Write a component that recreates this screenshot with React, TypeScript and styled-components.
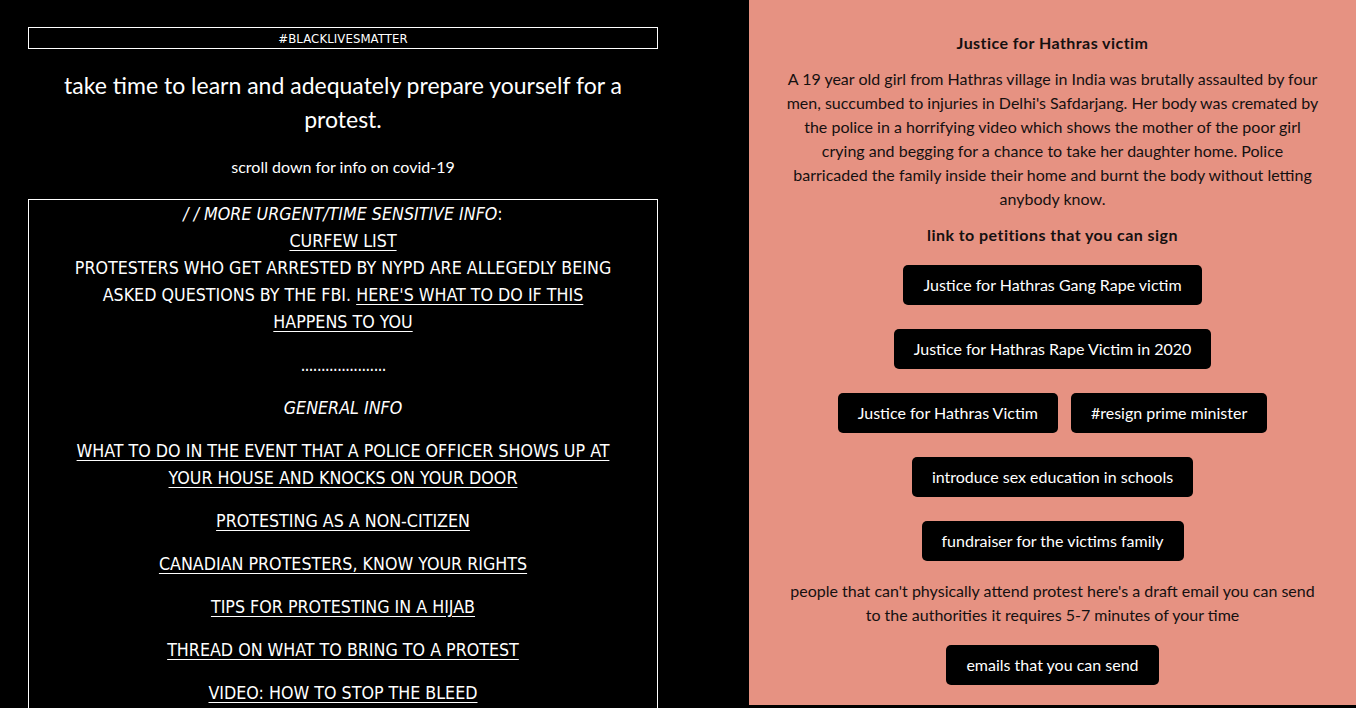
import React from "react";
import styled, { createGlobalStyle } from "styled-components";

const Global = createGlobalStyle`
  html, body { margin: 0; padding: 0; background: #000; }
  body { overflow: hidden; }
  a { color: inherit; }
`;

const Page = styled.div`
  display: grid;
  grid-template-columns: 749px 1fr;
  align-items: start;
  width: 1356px;
  height: 708px;
  overflow: hidden;
  background: #000;
`;

const Left = styled.div`
  padding: 27px 91px 0 28px;
  color: #fff;
  text-align: center;
`;

const Banner = styled.div`
  border: 1px solid #fff;
  height: 20px;
  line-height: 21px;
  font-family: "Liberation Sans Narrow", "DejaVu Sans Condensed", sans-serif;
  font-size: 13px;
  letter-spacing: 0.1px;
`;

const Headline = styled.h1`
  margin: 19px 0 0;
  padding: 0 12px;
  font-family: Lato, "Liberation Sans", sans-serif;
  font-weight: 400;
  font-size: 23px;
  line-height: 34px;
`;

const Sub = styled.p`
  margin: 19px 0 0;
  font-family: Lato, "Liberation Sans", sans-serif;
  font-size: 16px;
  line-height: 24px;
`;

const InfoBox = styled.div`
  margin-top: 20px;
  border: 1px solid #fff;
  border-bottom: none;
  padding: 1px 40px 40px;
  font-family: "Liberation Sans Narrow", "DejaVu Sans Condensed", sans-serif;
  font-size: 17.7px;
  line-height: 27px;
`;

const Para = styled.p`
  margin: 16px 0 0;
  &:first-child { margin-top: 0; }
`;

const Dots = styled(Para)`
  letter-spacing: -1px;
`;

const Em = styled.span`
  font-style: italic;
`;

const Link = styled.a`
  text-decoration: underline;
  text-underline-offset: 3px;
`;

const Right = styled.div`
  background: #e69282;
  color: #151010;
  padding: 31px 34px 20px;
  font-family: Lato, "Liberation Sans", sans-serif;
  font-size: 16px;
  line-height: 24px;
  text-align: center;
`;

const Title = styled.h2`
  margin: 0;
  font-size: 16px;
  font-weight: 700;
  letter-spacing: 0.45px;
  line-height: 24px;
`;

const Body = styled.p`
  margin: 12px 0 0;
`;

const SubTitle = styled.h3`
  margin: 12px 0 0;
  font-size: 16px;
  font-weight: 700;
  letter-spacing: 0.45px;
  line-height: 24px;
`;

const Buttons = styled.div<{ $top: number }>`
  margin-top: ${(p) => p.$top}px;
  display: flex;
  flex-direction: column;
  align-items: center;
  gap: 24px;
`;

const ButtonRow = styled.div`
  display: flex;
  justify-content: center;
  gap: 13px;
`;

const Btn = styled.a`
  display: inline-flex;
  align-items: center;
  height: 40px;
  padding: 0 20px;
  background: #000;
  color: #fff;
  border-radius: 5px;
  text-decoration: none;
  font-size: 16px;
  white-space: nowrap;
`;

const Body2 = styled.p`
  margin: 18px 0 0;
`;

export default function App() {
  return (
    <>
      <Global />
      <Page>
        <Left>
          <Banner>#BLACKLIVESMATTER</Banner>
          <Headline>take time to learn and adequately prepare yourself for a protest.</Headline>
          <Sub>scroll down for info on covid-19</Sub>
          <InfoBox>
            <Para>
              <Em>/ / MORE URGENT/TIME SENSITIVE INFO</Em>:
              <br />
              <Link href="#">CURFEW LIST</Link>
              <br />
              PROTESTERS WHO GET ARRESTED BY NYPD ARE ALLEGEDLY BEING ASKED QUESTIONS BY THE FBI.{" "}
              <Link href="#">HERE'S WHAT TO DO IF THIS HAPPENS TO YOU</Link>
            </Para>
            <Dots>.....................</Dots>
            <Para>
              <Em>GENERAL INFO</Em>
            </Para>
            <Para>
              <Link href="#">WHAT TO DO IN THE EVENT THAT A POLICE OFFICER SHOWS UP AT YOUR HOUSE AND KNOCKS ON YOUR DOOR</Link>
            </Para>
            <Para>
              <Link href="#">PROTESTING AS A NON-CITIZEN</Link>
            </Para>
            <Para>
              <Link href="#">CANADIAN PROTESTERS, KNOW YOUR RIGHTS</Link>
            </Para>
            <Para>
              <Link href="#">TIPS FOR PROTESTING IN A HIJAB</Link>
            </Para>
            <Para>
              <Link href="#">THREAD ON WHAT TO BRING TO A PROTEST</Link>
            </Para>
            <Para>
              <Link href="#">VIDEO: HOW TO STOP THE BLEED</Link>
            </Para>
          </InfoBox>
        </Left>
        <Right>
          <Title>Justice for Hathras victim</Title>
          <Body>
            A 19 year old girl from Hathras village in India was brutally assaulted by four men, succumbed to injuries in
            Delhi's Safdarjang. Her body was cremated by the police in a horrifying video which shows the mother of the poor
            girl crying and begging for a chance to take her daughter home. Police barricaded the family inside their home and
            burnt the body without letting anybody know.
          </Body>
          <SubTitle>link to petitions that you can sign</SubTitle>
          <Buttons $top={18}>
            <Btn href="#">Justice for Hathras Gang Rape victim</Btn>
            <Btn href="#">Justice for Hathras Rape Victim in 2020</Btn>
            <ButtonRow>
              <Btn href="#">Justice for Hathras Victim</Btn>
              <Btn href="#">#resign prime minister</Btn>
            </ButtonRow>
            <Btn href="#">introduce sex education in schools</Btn>
            <Btn href="#">fundraiser for the victims family</Btn>
          </Buttons>
          <Body2>
            people that can't physically attend protest here's a draft email you can send to the authorities it requires 5-7
            minutes of your time
          </Body2>
          <Buttons $top={18}>
            <Btn href="#">emails that you can send</Btn>
          </Buttons>
        </Right>
      </Page>
    </>
  );
}
